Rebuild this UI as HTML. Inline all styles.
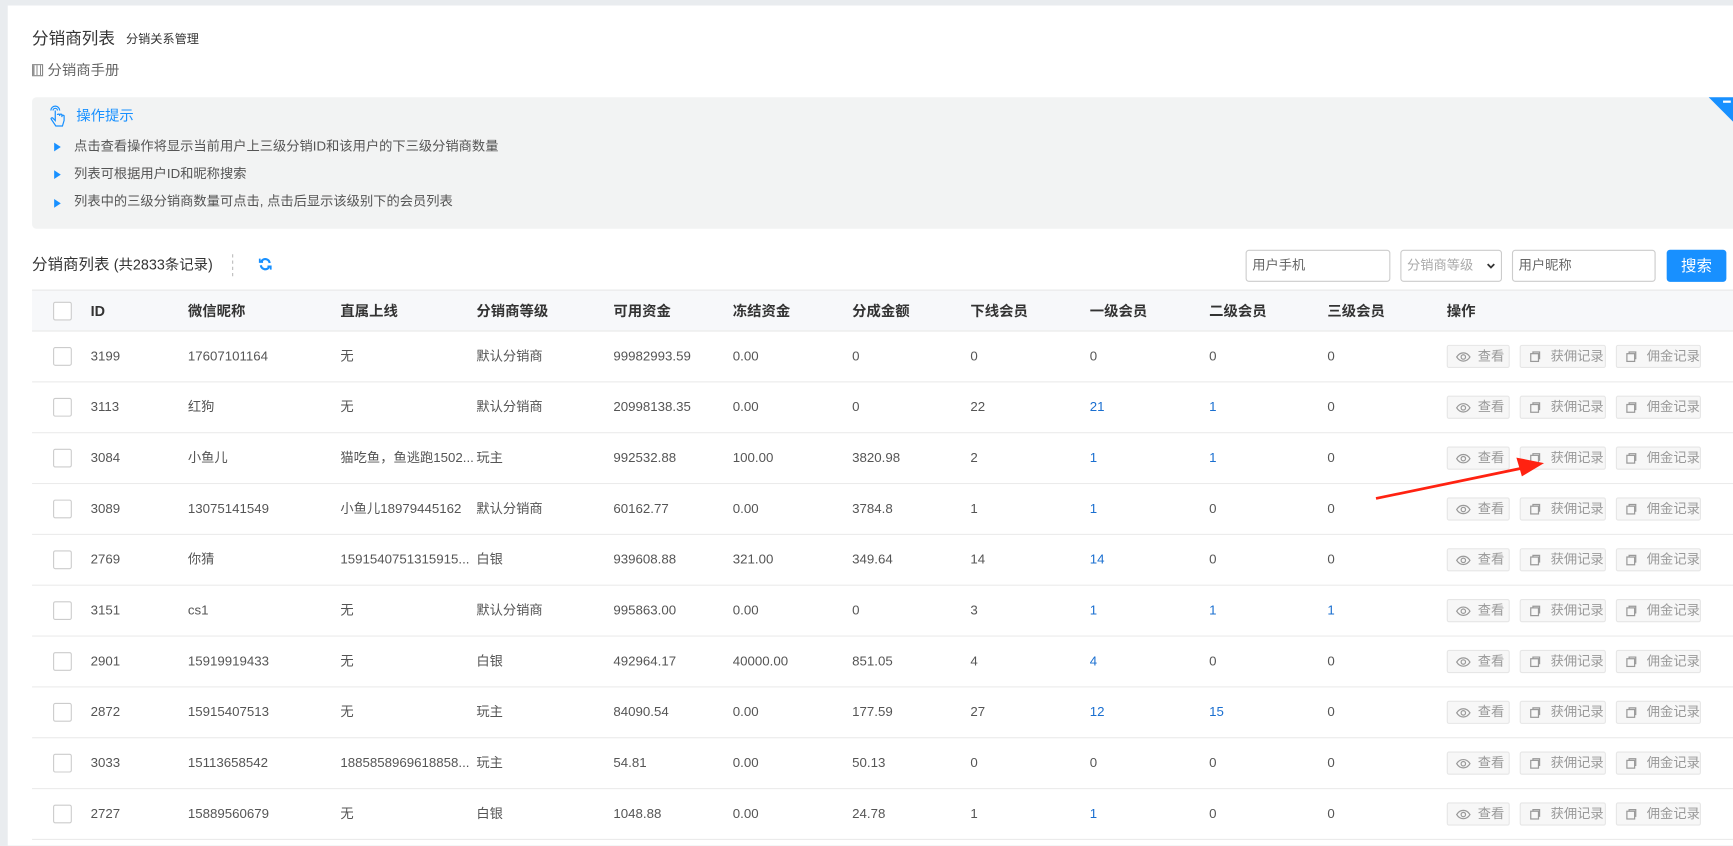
<!DOCTYPE html>
<html><head><meta charset="utf-8"><style>
*{box-sizing:border-box;margin:0;padding:0}
body{width:1733px;height:835px;overflow:hidden;background:#e9ecef;font-family:"Liberation Sans","Noto Sans CJK SC",sans-serif;font-size:12px;color:#555;position:relative}
#w{position:absolute;left:0;top:0;width:1568px;height:756px;transform:scale(1.10523);transform-origin:0 0}
.panel{position:absolute;left:7px;top:5px;width:1561px;height:760px;background:#fff}
.abs{position:absolute;white-space:nowrap;line-height:1.2}
.tip{position:absolute;left:29px;top:88px;width:1539px;height:119px;background:#f2f3f3;border-radius:4px 0 0 4px}
.tri{position:absolute;left:0;width:0;height:0;border-left:6px solid #1890ff;border-top:4px solid transparent;border-bottom:4px solid transparent}
.th{position:absolute;left:29px;top:262px;width:1539px;height:38px;background:#f7f8fa;border-top:1px solid #e8e8e8;border-bottom:1px solid #e8e8e8}
.row{position:absolute;left:29px;width:1539px;height:46px;border-bottom:1px solid #ebebeb}
.cb{position:absolute;left:19px;width:17px;height:17px;border:1px solid #ccc;border-radius:2px;background:#fff}
.c{position:absolute;top:15px;font-size:12px;line-height:14px;color:#555;white-space:nowrap}
.h{position:absolute;top:11px;font-weight:bold;color:#333;font-size:13px;line-height:15px}
.blue{color:#1a6fd0}
.btn{position:absolute;top:12px;height:21px;border:1px solid #e6e6e6;background:#f7f7f7;border-radius:2px;color:#999;font-size:12px;line-height:19px;padding-left:27px;white-space:nowrap}
.btn svg{position:absolute;left:7px;top:4px}
.inp{position:absolute;top:226px;height:29px;border:1px solid #ccc;border-radius:3px;background:#fff;font-size:12px;color:#666;padding:6px 5px;line-height:14px;white-space:nowrap}
</style></head><body>
<div id="w">
<div class="panel"></div>
<div class="abs" style="left:29px;top:27px;font-size:15px;color:#333">分销商列表</div>
<div class="abs" style="left:114px;top:30px;font-size:11px;color:#333">分销关系管理</div>
<div class="abs" style="left:29px;top:56px;font-size:13px;color:#666"><span style="display:inline-block;width:10px;height:11px;border:1px solid #888;background:repeating-linear-gradient(90deg,#888 0 1px,#fff 1px 3px);vertical-align:-1px;margin-right:4px"></span>分销商手册</div>
<div class="tip">
 <svg class="abs" style="left:14px;top:6px" width="18" height="22" viewBox="0 0 18 22" fill="none" stroke="#1890ff" stroke-width="1.1"><path d="M3 6a4 4 0 0 1 8 0M5 6a2 2 0 0 1 4 0"/><path d="M7 6v9l-2-2c-1-1-2.5 0-1.5 1l4 6h6l1.5-5v-4c0-1-2-1-2 0v1v-2c0-1-2-1-2 0v1v-1c0-1-2-1-2 0"/></svg>
 <div class="abs" style="left:40px;top:9px;font-size:13px;color:#1890ff">操作提示</div>
 <div class="tri" style="left:20px;top:41px"></div><div class="abs" style="left:38px;top:37px">点击查看操作将显示当前用户上三级分销ID和该用户的下三级分销商数量</div>
 <div class="tri" style="left:20px;top:66px"></div><div class="abs" style="left:38px;top:62px">列表可根据用户ID和昵称搜索</div>
 <div class="tri" style="left:20px;top:92px"></div><div class="abs" style="left:38px;top:87px">列表中的三级分销商数量可点击, 点击后显示该级别下的会员列表</div>
</div>
<div class="abs" style="left:1546px;top:88px;width:0;height:0;border-top:22px solid #1890ff;border-left:22px solid transparent"></div>
<div class="abs" style="left:1559px;top:91px;width:7px;height:2px;background:#fff"></div>
<div class="abs" style="left:29px;top:231px;font-size:14px;color:#333">分销商列表 <span style="font-size:13px">(共2833条记录)</span></div>
<div class="abs" style="left:210px;top:230px;height:20px;border-left:1px dashed #bbb"></div>
<svg class="abs" style="left:234px;top:233px" width="12" height="12" viewBox="0 0 12 12" fill="none" stroke="#1890ff" stroke-width="2"><path d="M10 5A4 4 0 0 0 2.5 3.5M2 7a4 4 0 0 0 7.5 1.5"/><path d="M1 1v3h3M11 11V8H8" stroke-width="1.6"/></svg>
<div class="inp" style="left:1127px;width:131px">用户手机</div>
<div class="inp" style="left:1267px;width:92px;color:#aaa">分销商等级<svg style="position:absolute;right:5px;top:11px" width="8" height="6" viewBox="0 0 8 6"><path d="M1 1l3 3l3-3" stroke="#333" stroke-width="1.6" fill="none"/></svg></div>
<div class="inp" style="left:1368px;width:130px">用户昵称</div>
<div class="abs" style="left:1508px;top:226px;width:54px;height:29px;background:#1890ff;border-radius:3px;color:#fff;font-size:14px;text-align:center;line-height:29px">搜索</div>
<div class="th">
 <div class="cb" style="top:10px"></div>
 <div class="h" style="left:53px">ID</div><div class="h" style="left:141px">微信昵称</div><div class="h" style="left:279px">直属上线</div><div class="h" style="left:402px">分销商等级</div><div class="h" style="left:526px">可用资金</div><div class="h" style="left:634px">冻结资金</div><div class="h" style="left:742px">分成金额</div><div class="h" style="left:849px">下线会员</div><div class="h" style="left:957px">一级会员</div><div class="h" style="left:1065px">二级会员</div><div class="h" style="left:1172px">三级会员</div><div class="h" style="left:1280px">操作</div>
</div>
<div id="rows"></div>
<svg class="abs" style="left:0;top:0" width="1568" height="756"><path d="M1245 451L1380 423" stroke="#f21" stroke-width="2.5"/><path d="M1397 419L1372 414L1377 431z" fill="#f21"/></svg>
</div>
<script>
var d=[["3199","17607101164","无","默认分销商","99982993.59","0.00","0","0","0","0","0"],
["3113","红狗","无","默认分销商","20998138.35","0.00","0","22","21","1","0"],
["3084","小鱼儿","猫吃鱼，鱼逃跑1502...","玩主","992532.88","100.00","3820.98","2","1","1","0"],
["3089","13075141549","小鱼儿18979445162","默认分销商","60162.77","0.00","3784.8","1","1","0","0"],
["2769","你猜","1591540751315915...","白银","939608.88","321.00","349.64","14","14","0","0"],
["3151","cs1","无","默认分销商","995863.00","0.00","0","3","1","1","1"],
["2901","15919919433","无","白银","492964.17","40000.00","851.05","4","4","0","0"],
["2872","15915407513","无","玩主","84090.54","0.00","177.59","27","12","15","0"],
["3033","15113658542","1885858969618858...","玩主","54.81","0.00","50.13","0","0","0","0"],
["2727","15889560679","无","白银","1048.88","0.00","24.78","1","1","0","0"]];
var xs=[53,141,279,402,526,634,742,849,957,1065,1172];
var eye='<svg width="14" height="12" viewBox="0 0 14 12" fill="none" stroke="#999" stroke-width="1.1"><path d="M1 6c3-5 9-5 12 0c-3 5-9 5-12 0z"/><circle cx="7" cy="6" r="2"/></svg>';
var cp='<svg width="12" height="12" viewBox="0 0 12 12" fill="none" stroke="#999" stroke-width="1.1"><rect x="2" y="3" width="7" height="7"/><path d="M4 3V1.5h6v6H9"/></svg>';
var h='';
d.forEach(function(r,i){h+='<div class="row" style="top:'+(300+i*46)+'px"><div class="cb" style="top:14px"></div>';
r.forEach(function(v,j){var b=(j>=8&&v!="0")?' blue':'';h+='<div class="c'+b+'" style="left:'+xs[j]+'px">'+v+'</div>';});
h+='<div class="btn" style="left:1280px;width:57px">'+eye+'查看</div><div class="btn" style="left:1346px;width:78px">'+cp+'获佣记录</div><div class="btn" style="left:1433px;width:77px">'+cp+'佣金记录</div></div>';});
document.getElementById('rows').innerHTML=h;
</script>
</body></html>
